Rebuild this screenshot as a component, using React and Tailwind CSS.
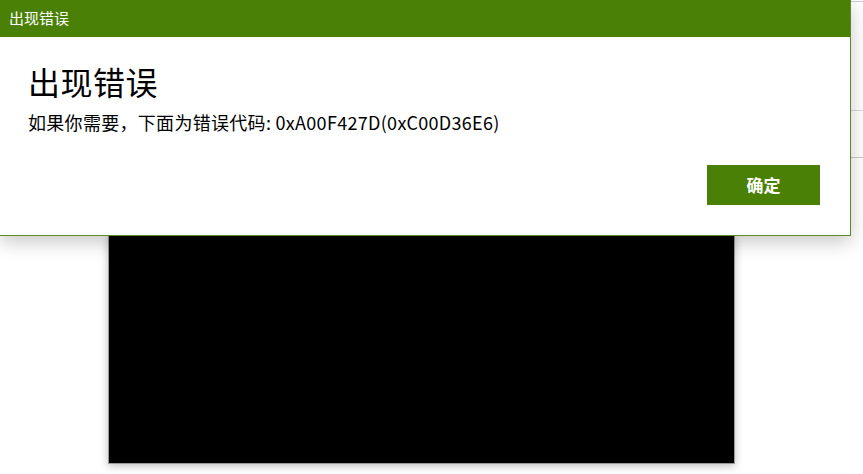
import React from "react";

export default function App() {
  const font = { fontFamily: '"Noto Sans CJK SC", "Noto Sans", sans-serif' };

  return (
    <div
      className="relative w-[863px] h-[474px] overflow-hidden bg-white"
      style={font}
    >
      {/* Page behind the dialog */}
      <div className="flex flex-col">
        <div className="h-[2px] border-b border-[#c9ccd1]" />
        <div className="h-[109px] border-b border-[#d6d8db]" />
        <div className="h-[47px] border-b border-[#c4c7cc]" />
        <div className="pl-[108px] pt-[76px]">
          <div className="w-[627px] h-[230px] bg-black border border-[#9a9a9a] shadow-[0_2px_8px_rgba(0,0,0,0.25)]" />
        </div>
      </div>

      {/* Error dialog */}
      <div className="absolute top-0 left-0 w-[851px] h-[236px] flex flex-col bg-white border-r border-b border-[#5a8a22] shadow-[0_6px_18px_rgba(0,0,0,0.22)]">
        <div className="h-[37px] bg-[#4a8005] flex items-center px-[9px] text-white text-[15px]">
          出现错误
        </div>
        <div className="flex flex-col pl-[28px] pr-[30px] pt-[24px]">
          <h1 className="text-[32px] leading-[40px] text-black tracking-[0.5px]">出现错误</h1>
          <p className="text-[18px] leading-[26px] text-black mt-[8px] tracking-[0.3px]">
            如果你需要，下面为错误代码: 0xA00F427D(0xC00D36E6)
          </p>
          <div className="flex justify-end mt-[30px]">
            <button className="w-[113px] h-[40px] bg-[#4a8005] text-white text-[17px] font-bold">
              确定
            </button>
          </div>
        </div>
      </div>
    </div>
  );
}
